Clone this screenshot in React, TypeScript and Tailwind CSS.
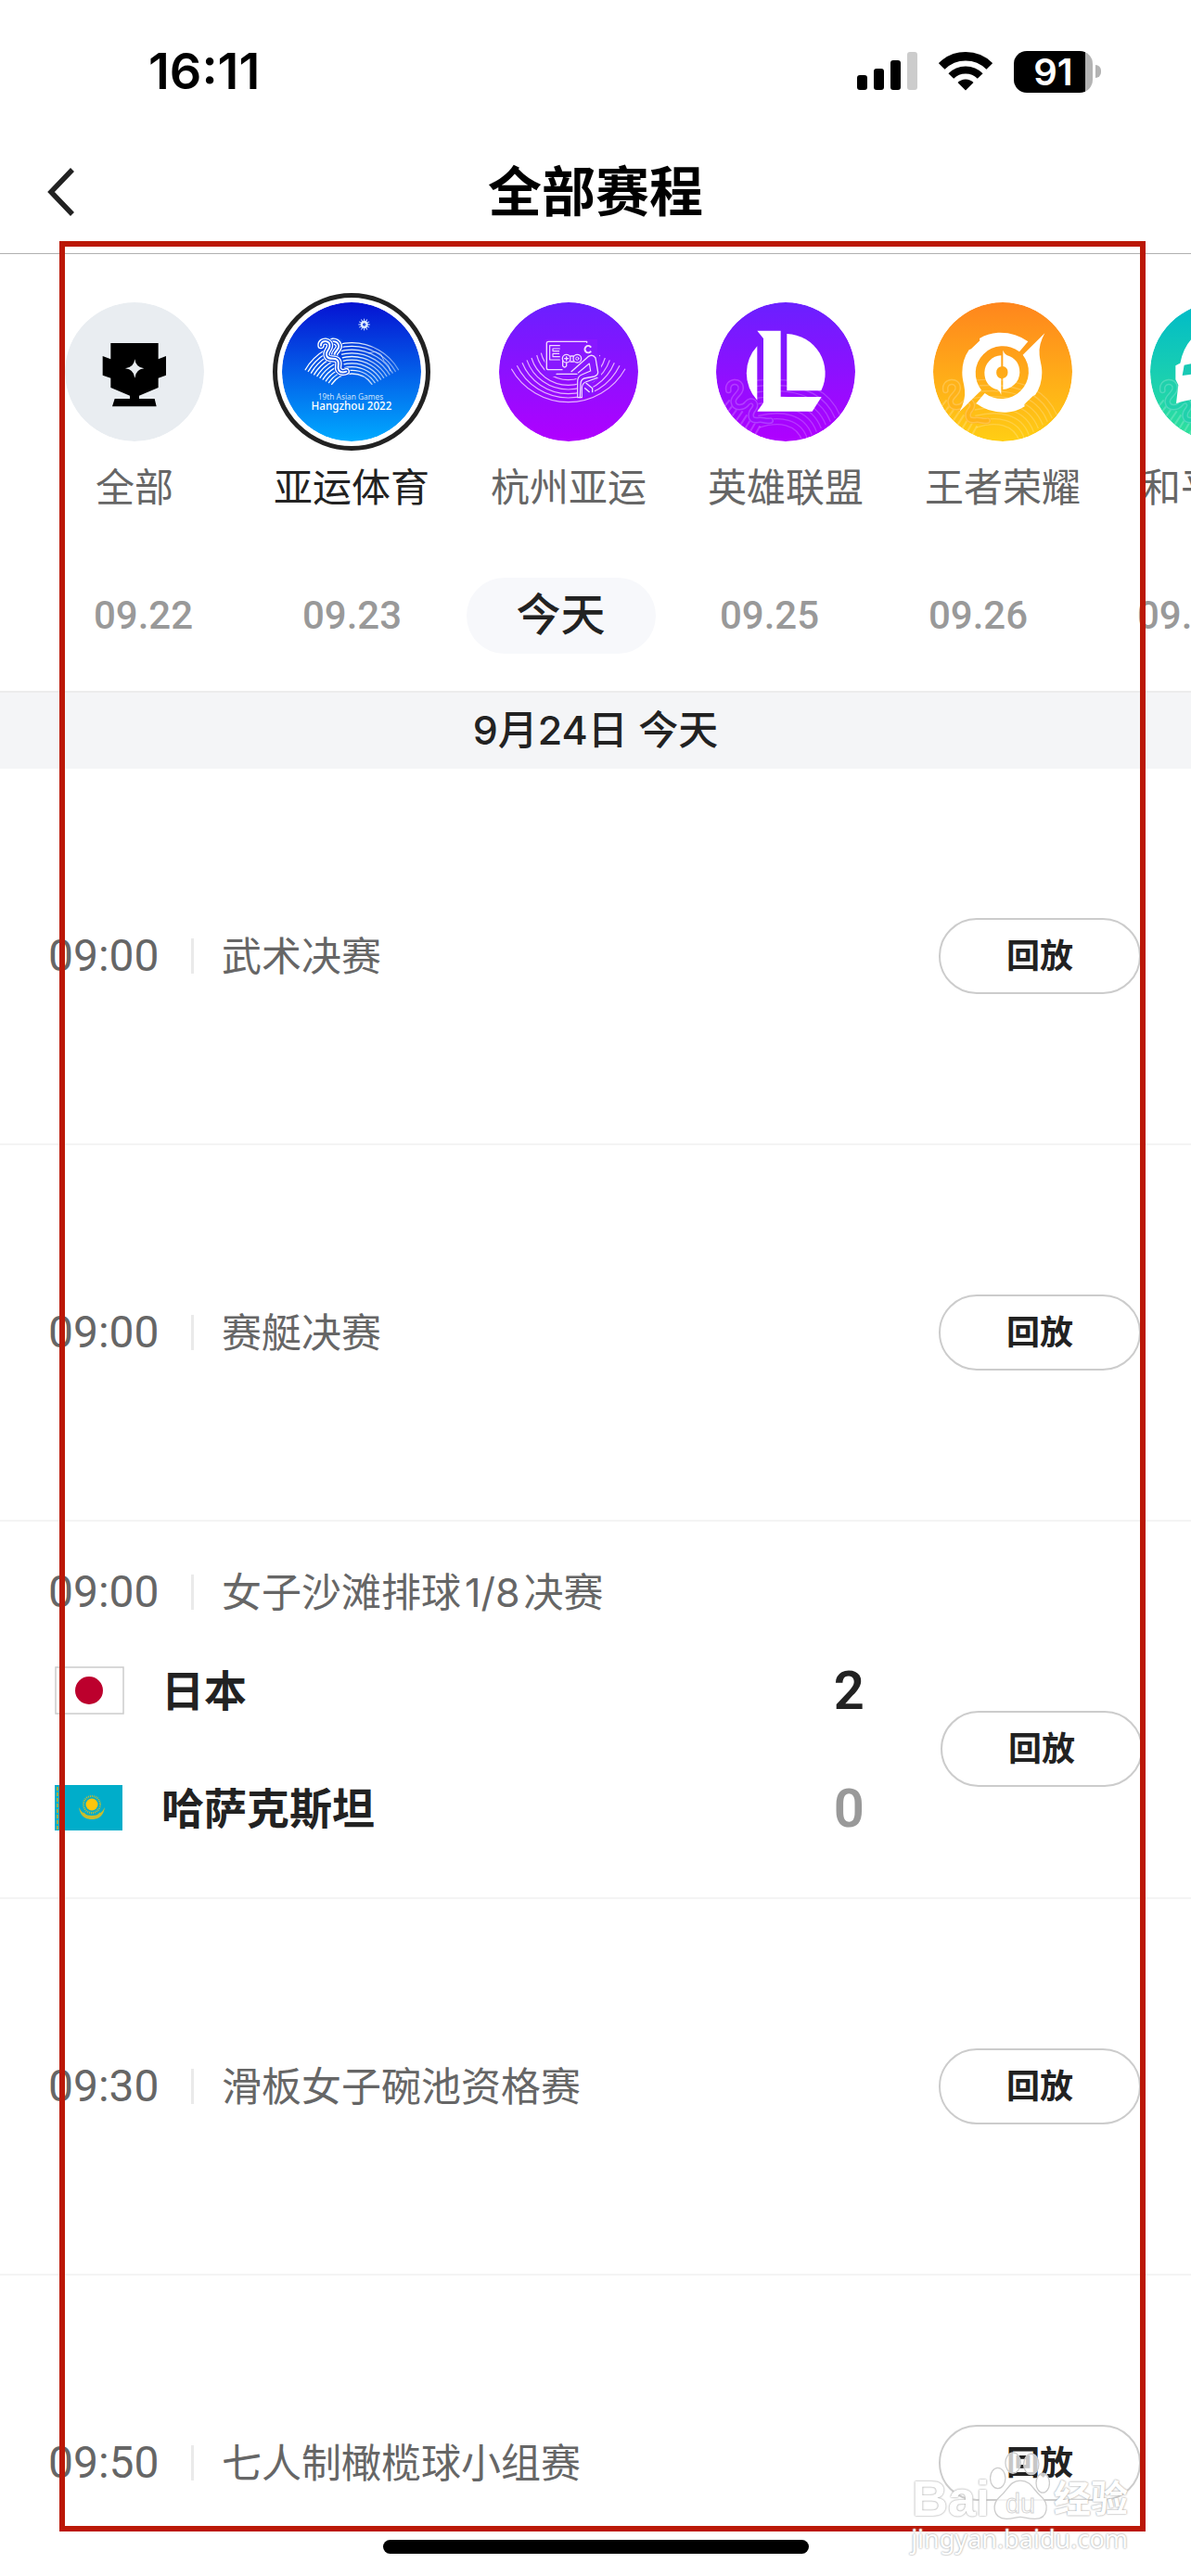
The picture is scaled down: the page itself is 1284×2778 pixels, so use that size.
import type { ReactNode } from 'react';

type Point = [number, number];

function arcBetween(a: Point, b: Point, sagitta: number, sweep: 0 | 1) {
  const half = Math.hypot(b[0] - a[0], b[1] - a[1]) / 2;
  const r = (half * half + sagitta * sagitta) / (2 * sagitta);
  return `M${a[0]} ${a[1]}A${r} ${r} 0 0 ${sweep} ${b[0]} ${b[1]}`;
}

function Disc({ id, from, to, children }: { id: string; from: string; to: string; children: ReactNode }) {
  return (
    <svg viewBox="0 0 450 450" className="size-[150px] rounded-full" aria-hidden="true">
      <defs>
        <linearGradient id={id} x1="0" y1="0" x2="0" y2="1">
          <stop offset="0" stopColor={from} />
          <stop offset="1" stopColor={to} />
        </linearGradient>
      </defs>
      <circle cx="225" cy="225" r="225" fill={`url(#${id})`} />
      {children}
    </svg>
  );
}

/* Faint tide pattern along the bottom of the e-sport badges */
function Tide({ shade }: { shade: string }) {
  const curl =
    'M40 285c-6-34 42-36 40-6c-2 20-26 24-24 44c4 24 34 18 44 4c14-18 36 0 22 18c-14 16-14 40 14 36c16-4 20 6 40 2';
  return (
    <g fill="none" stroke="#fff" strokeOpacity="0.2" strokeWidth="4">
      {[0, 1, 2, 3, 4, 5, 6, 7, 8].map((i) => (
        <path key={i} d={`M${140 - i * 2} ${405 - i * 19}C${200 + i * 6} ${385 - i * 18} ${262 + i * 12} ${392 - i * 16} ${280 + i * 15} ${452 - i * 11}`} />
      ))}
      {[0, 1, 2, 3, 4, 5, 6, 7].map((i) => (
        <path key={`l${i}`} d={`M${20 + i * 14} ${345 + i * 14}L${44 + i * 14} ${316 + i * 12}`} strokeWidth="6" />
      ))}
      <g strokeLinecap="round">
        <path d={curl} stroke={shade} strokeOpacity="1" strokeWidth="22" />
        <path d={curl} strokeWidth="20" />
        <path d={curl} stroke={shade} strokeOpacity="1" strokeWidth="11" />
      </g>
    </g>
  );
}

function TrophyIcon() {
  return (
    <Disc id="g-all" from="#e9edf1" to="#e9edf1">
      <path
        d="M148 132H302V184L327 174V236L302 245V276L240 302V312H290L296 337H153L161 312H210V302L148 276V245L122 236V174L148 184Z"
        fill="#000"
      />
      <path d="M226 184Q229 211 256 214Q229 217 226 245Q223 217 195 214Q223 211 226 184Z" fill="#e9edf1" />
    </Disc>
  );
}

function AsianGamesIcon() {
  const a = 'M126 140c-2-20 34-18 28 4c-4 14-16 18-8 32c8 12 22 2 32 10c12 10-2 22 6 34c4 6 14 8 24 4';
  const b = 'M152 134c14-18 42 0 28 18c-8 12-14 14-8 26';
  return (
    <Disc id="g-asian" from="#0612d2" to="#00aaff">
      <defs>
        <linearGradient id="g-fan" gradientUnits="userSpaceOnUse" x1="75" y1="0" x2="378" y2="0">
          <stop offset="0" stopColor="#fff" />
          <stop offset="0.5" stopColor="#fff" stopOpacity="0.95" />
          <stop offset="1" stopColor="#fff" stopOpacity="0.4" />
        </linearGradient>
      </defs>
      <g fill="none" stroke="url(#g-fan)" strokeWidth="4" strokeLinecap="round">
        {[0, 1, 2, 3, 4, 5, 6, 7, 8, 9].map((i) => {
          const dx = 65 + i * 9.5;
          const y = 265 - i * 5.2;
          return <path key={i} d={arcBetween([226 - dx, y], [226 + dx, y], 34 + i * 5.9, 1)} />;
        })}
      </g>
      <path d="M112 118H132L150 170L180 216L206 228L190 160L196 120L160 108Z" fill="#0b45e2" />
      <g fill="none" strokeLinecap="round" strokeLinejoin="round">
        {[b, a].map((d) => (
          <g key={d}>
            <path d={d} stroke="#0848e3" strokeWidth="26" />
            <path d={d} stroke="#fff" strokeWidth="22" />
            <path d={d} stroke="#0848e3" strokeWidth="14" />
            <path d={d} stroke="#fff" strokeWidth="6" />
          </g>
        ))}
        <path d="M280 164l22-4l18 8l10 22l14 14l6 18" stroke="#fff" strokeOpacity="0.6" strokeWidth="3" />
      </g>
      <g stroke="#cfe0ff" strokeWidth="3">
        {[0, 30, 60, 90, 120, 150].map((deg) => (
          <path key={deg} d="M266 53V91" transform={`rotate(${deg} 266 72)`} />
        ))}
        <circle cx="266" cy="72" r="11" fill="#e8f0ff" />
        <circle cx="266" cy="72" r="4" fill="#2a50dd" stroke="#2a50dd" />
      </g>
      <g fill="#fff" textAnchor="middle" fontFamily="Noto Sans, sans-serif">
        <text x="222" y="314" fontSize="25" fillOpacity="0.8">19th Asian Games</text>
        <text x="225" y="348" fontSize="35" fontWeight="500">Hangzhou 2022</text>
      </g>
    </Disc>
  );
}

function EsportsIcon() {
  const rows = [
    [40, 215, 323], [58, 205, 309], [75, 196, 296], [90, 187, 282], [105, 180, 268], [122, 171, 251], [136, 164, 234],
  ];
  return (
    <Disc id="g-esport" from="#6a20ff" to="#b000ff">
      <g fill="none" stroke="#e6b3ff" strokeWidth="3.5">
        {rows.map(([x, y, bottom]) => (
          <path key={x} d={arcBetween([x, y], [448 - x, y], bottom - y, 0)} />
        ))}
      </g>
      <path d="M148 120H318V165L330 180V240L300 262L312 296L254 312L250 240H148Z" fill="#8818ff" />
      <g fill="none" stroke="#f1d9ff" strokeWidth="4" strokeLinecap="round" strokeLinejoin="round">
        <path d="M284 130V127H160Q154 127 154 133V212Q154 218 160 218H204" />
        <path d="M196 140H164V186H196M196 150H174V158H194M194 166H174V176H196" strokeWidth="3.5" />
        <path d="M296 144a11 11 0 1 0 0 16" strokeWidth="6" />
        <circle cx="218" cy="182" r="13" />
        <circle cx="253" cy="182" r="13" />
        <path d="M231 174H241M231 192H241M206 188V206Q212 214 218 206V196M212 182H224M218 176V188" />
        <circle cx="253" cy="182" r="5" strokeWidth="3" />
        <path d="M186 232H252" />
        <path d="M234 224L288 176Q302 166 312 180L320 226Q320 236 308 240L276 246Q264 250 264 264L262 308" />
        <path d="M256 228L292 198L296 222L268 234Q254 240 254 256V308H268V276Q270 262 280 258L318 244" strokeWidth="3.5" />
        <path d="M282 262L302 278V290M278 278L292 290" />
      </g>
    </Disc>
  );
}

function LeagueIcon() {
  return (
    <Disc id="g-lol" from="#6a20ff" to="#b000ff">
      <Tide shade="#9e0dff" />
      <path d="M133 353L153 325V117L133 92H209V306H341L311 353Z" fill="#fff" />
      <path d="M229 102A128 128 0 0 1 340 286H229Z" fill="#fff" />
      <path d="M133 142A128 128 0 0 0 133 317Z" fill="#fff" />
    </Disc>
  );
}

function HonorIcon() {
  return (
    <Disc id="g-hok" from="#ff851d" to="#ffce14">
      <Tide shade="#ffb319" />
      <g fill="#fff">
        <path d="M307 127Q266 96 210 98Q176 100 150 117L151 124L123 151L116 154Q94 186 94 227C94 250 100 262 102 284Q106 316 85 354L156 284A88 88 0 0 1 279 160Z" />
        <path d="M307 127Q266 96 210 98Q176 100 150 117L151 124L123 151L116 154Q94 186 94 227C94 250 100 262 102 284Q106 316 85 354L156 284A88 88 0 0 1 279 160Z" transform="rotate(180 223 227)" />
        <path d="M220 172A57 57 0 0 0 166 227Q166 270 208 283Q216 287 220 299V247A20 20 0 0 1 220 208Z" />
        <path d="M220 172A57 57 0 0 0 166 227Q166 270 208 283Q216 287 220 299V247A20 20 0 0 1 220 208Z" transform="rotate(180 223 227)" />
      </g>
    </Disc>
  );
}

function PeaceIcon() {
  return (
    <Disc id="g-peace" from="#00bac9" to="#30e29b">
      <Tide shade="#20d1ac" />
      <path d="M240 80Q120 80 97 197L82 205V250L91 268L84 327Q150 304 240 310Z" fill="#fff" />
      <path d="M110 203L240 180V220L104 237Z" fill="#18c9b5" />
    </Disc>
  );
}

function JapanFlag() {
  return (
    <svg viewBox="0 0 75 52" className="h-[52px] w-[75px]" role="img" aria-label="日本">
      <rect x="1" y="1" width="73" height="50" fill="#fff" stroke="#ccc" strokeWidth="1.5" />
      <circle cx="37" cy="26" r="15" fill="#bc002d" />
    </svg>
  );
}

function KazakhstanFlag() {
  return (
    <svg viewBox="0 0 75 50" className="h-[50px] w-[75px]" role="img" aria-label="哈萨克斯坦">
      <rect width="73" height="49" fill="#00adca" />
      <path d="M3 2V48" stroke="#9fae45" strokeWidth="2" strokeDasharray="4 2" />
      <circle cx="40" cy="21" r="6.5" fill="#fec50c" />
      <circle cx="40" cy="21" r="9" fill="none" stroke="#c9bd2e" strokeWidth="2" strokeDasharray="1 1" />
      <path d="M26 24Q28 37 40 37Q52 37 54 24Q50 33 40 33Q30 33 26 24Z" fill="#c9bd2e" />
      <path d="M31 30Q40 42 49 30" fill="none" stroke="#c9bd2e" strokeWidth="1.5" />
    </svg>
  );
}

const sports = [
  { name: '全部', icon: <TrophyIcon /> },
  { name: '亚运体育', icon: <AsianGamesIcon />, active: true },
  { name: '杭州亚运', icon: <EsportsIcon /> },
  { name: '英雄联盟', icon: <LeagueIcon /> },
  { name: '王者荣耀', icon: <HonorIcon /> },
  { name: '和平精英', icon: <PeaceIcon /> },
];

const dates = ['09.22', '09.23', '今天', '09.25', '09.26', '09.27'];

function StatusBar() {
  return (
    <div className="flex h-[154px] shrink-0 items-center justify-between pr-[97px] pl-[160px]">
      <span className="text-[54px] leading-[60px] font-semibold text-black">16:11</span>
      <div className="flex items-center gap-[23px]">
        <svg viewBox="0 0 65 42" className="h-[42px] w-[65px]" aria-hidden="true">
          <rect x="0" y="25" width="11" height="16" rx="3" />
          <rect x="18" y="18" width="11" height="23" rx="3" />
          <rect x="36" y="9" width="11" height="32" rx="3" />
          <rect x="54" y="0" width="11" height="41" rx="3" fill="#ccc" />
        </svg>
        <svg viewBox="0 0 58 42" className="h-[42px] w-[58px]" aria-hidden="true">
          <path d="M3.2 15.5A36.5 36.5 0 0 1 54.8 15.5" fill="none" stroke="#000" strokeWidth="9.5" />
          <path d="M13.3 26A22 22 0 0 1 44.7 26" fill="none" stroke="#000" strokeWidth="8" />
          <path d="M20.5 33A12 12 0 0 1 37.5 33L29 41.5Z" />
        </svg>
        <div className="flex items-center gap-[3px]">
          <div className="flex h-[45px] w-[85px] items-center justify-center rounded-[14px] bg-[linear-gradient(90deg,#000_91%,#b3b3b3_91%)] text-[40px] leading-[45px] font-semibold text-white">
            91
          </div>
          <div className="h-[14px] w-[6px] rounded-r-full bg-[#b3b3b3]" />
        </div>
      </div>
    </div>
  );
}

function ReplayButton() {
  return (
    <button className="h-[82px] w-[218px] shrink-0 rounded-full border-2 border-[#ccc] text-[36px] leading-[48px] font-bold text-[#222]">
      回放
    </button>
  );
}

function EventTitle({ time, children }: { time: string; children: ReactNode }) {
  return (
    <div className="flex items-center text-[#666]">
      <time className="w-[154px] font-['Roboto'] text-[48px] leading-[50px]">{time}</time>
      <span className="h-[38px] w-[3px] bg-[#eaeaea]" />
      <h2 className="ml-[30px] text-[43px] leading-[50px]">{children}</h2>
    </div>
  );
}

function EventRow({ time, title }: { time: string; title: string }) {
  return (
    <li className="flex h-[406px] shrink-0 items-center justify-between border-b-2 border-[#f4f4f4] pr-[54px] pl-[52px]">
      <EventTitle time={time}>{title}</EventTitle>
      <ReplayButton />
    </li>
  );
}

function Team({ flag, name, score, won }: { flag: ReactNode; name: string; score: number; won?: boolean }) {
  return (
    <div className="flex h-[127px] items-center">
      {flag}
      <span className="ml-[40px] flex-1 text-[46px] leading-[56px] font-bold text-[#222]">{name}</span>
      <span
        className={
          won
            ? "font-['Roboto'] text-[58px] leading-[64px] font-semibold text-[#222]"
            : "font-['Roboto'] text-[58px] leading-[64px] font-semibold text-[#999]"
        }
      >
        {score}
      </span>
    </div>
  );
}

function Watermark() {
  return (
    <div className="pointer-events-none absolute right-[68px] bottom-[20px] flex flex-col items-end text-white [text-shadow:0_0_2px_#aaa,0_0_2px_#bbb]">
      <div className="flex items-end font-['Liberation_Sans','Noto_Sans_CJK_SC',sans-serif] font-bold">
        <span className="text-[54px] leading-[48px]">Bai</span>
        <svg viewBox="495 175 195 232" className="h-[76px] w-[65px]" aria-hidden="true">
          <g fill="#fff" fillOpacity="0.75" stroke="#ccc" strokeWidth="4">
            <ellipse cx="520" cy="268" rx="25" ry="34" />
            <ellipse cx="570" cy="218" rx="25" ry="34" />
            <ellipse cx="630" cy="222" rx="25" ry="34" />
            <ellipse cx="668" cy="284" rx="22" ry="32" />
            <path d="M594 276C630 276 636 306 660 326C690 350 688 402 642 402C618 402 606 396 594 396C582 396 570 402 548 402C500 400 500 352 528 328C554 306 560 276 594 276Z" />
          </g>
          <text x="594" y="382" fontSize="88" fontWeight="400" textAnchor="middle" fill="#fff" stroke="#d4d4d4" strokeWidth="3" style={{ textShadow: 'none' }}>
            du
          </text>
        </svg>
        <span className="ml-1 text-[40px] leading-[46px]">经验</span>
      </div>
      <span className="font-['Noto_Sans',sans-serif] text-[27px] leading-[40px]">jingyan.baidu.com</span>
    </div>
  );
}

export default function App() {
  return (
    <div className="relative flex h-screen flex-col overflow-hidden bg-white font-['Inter','Noto_Sans_CJK_SC',sans-serif]">
      <StatusBar />
      <header className="flex h-[120px] shrink-0 items-center border-b border-[#b0b0b0] pb-[14px]">
        <button aria-label="返回" className="flex w-[150px] pl-[50px]">
          <svg viewBox="0 0 30 54" className="h-[54px] w-[30px]" aria-hidden="true">
            <path d="M28 3L5 27L28 51" fill="none" stroke="#222" strokeWidth="5.5" />
          </svg>
        </button>
        <h1 className="flex-1 text-center text-[58px] leading-[72px] font-bold text-black">全部赛程</h1>
        <div className="w-[150px]" />
      </header>

      <nav className="flex h-[290px] shrink-0 overflow-hidden pl-[28px]" aria-label="项目">
        {sports.map((sport) => (
          <button key={sport.name} className="flex w-[234px] shrink-0 flex-col items-center pt-[42px]">
            <span
              className={
                sport.active
                  ? 'flex size-[170px] items-center justify-center rounded-full border-5 border-[#222]'
                  : 'flex size-[170px] items-center justify-center'
              }
            >
              {sport.icon}
            </span>
            <span className={sport.active ? 'mt-[15px] text-[42px] leading-[50px] text-[#222]' : 'mt-[15px] text-[42px] leading-[50px] text-[#666]'}>
              {sport.name}
            </span>
          </button>
        ))}
      </nav>

      <nav className="flex h-[181px] shrink-0 overflow-hidden pt-[59px] pl-[42px]" aria-label="日期">
        {dates.map((date) => (
          <button key={date} className="flex h-[82px] w-[225px] shrink-0 items-center justify-center">
            {date === '今天' ? (
              <span className="h-[82px] w-[204px] rounded-full bg-[#f7f8fb] text-[48px] leading-[80px] font-medium text-[#222]">{date}</span>
            ) : (
              <span className="font-['Roboto'] text-[42px] leading-[82px] font-medium text-[#999]">{date}</span>
            )}
          </button>
        ))}
      </nav>

      <div className="h-[84px] shrink-0 border-t-2 border-[#ececec] bg-[#f4f5f7] text-center text-[43px] leading-[80px] font-medium text-[#222]">
        9月24日 今天
      </div>

      <ul className="flex min-h-0 flex-1 flex-col overflow-y-auto [scrollbar-width:none]">
        <EventRow time="09:00" title="武术决赛" />
        <EventRow time="09:00" title="赛艇决赛" />
        <li className="h-[407px] shrink-0 border-b-2 border-[#f4f4f4] pt-[51px] pr-[52px] pl-[52px]">
          <EventTitle time="09:00">
            女子沙滩排球<span className="mx-1">1/8</span>决赛
          </EventTitle>
          <div className="mt-[17px] flex items-center justify-between pl-[7px]">
            <div className="mr-[82px] flex-1">
              <Team flag={<JapanFlag />} name="日本" score={2} won />
              <Team flag={<KazakhstanFlag />} name="哈萨克斯坦" score={0} />
            </div>
            <ReplayButton />
          </div>
        </li>
        <EventRow time="09:30" title="滑板女子碗池资格赛" />
        <EventRow time="09:50" title="七人制橄榄球小组赛" />
      </ul>

      <div className="absolute inset-x-0 bottom-[24px] flex justify-center">
        <div className="h-[15px] w-[459px] rounded-full bg-black" />
      </div>
      <div className="pointer-events-none absolute top-[260px] right-[49px] bottom-[48px] left-[64px] border-6 border-[#bb1807]" />
      <Watermark />
    </div>
  );
}
